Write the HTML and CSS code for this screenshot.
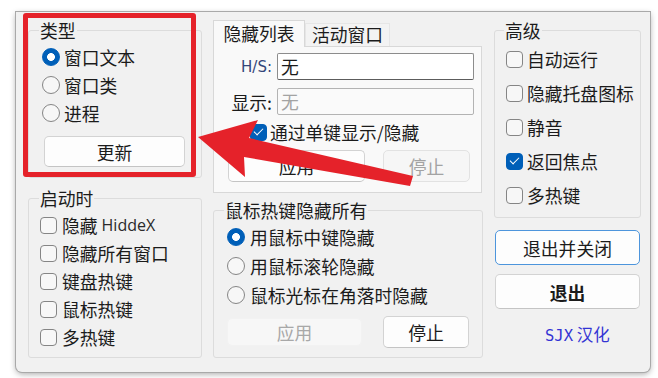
FILE: index.html
```html
<!DOCTYPE html>
<html lang="zh-CN">
<head>
    <meta charset="UTF-8">
    <title>HiddeX</title>
    <link rel="stylesheet" href="styles.css">
</head>
<body>
    <div class="window">
        <div class="col col-left">
            <fieldset class="group group-type">
                <legend>类型</legend>
                <div class="opt"><span class="radio on"></span>窗口文本</div>
                <div class="opt"><span class="radio"></span>窗口类</div>
                <div class="opt"><span class="radio"></span>进程</div>
                <button class="btn btn-update">更新</button>
            </fieldset>

            <fieldset class="group group-start">
                <legend>启动时</legend>
                <div class="opt"><span class="check"></span>隐藏&nbsp;<span class="latin">HiddeX</span></div>
                <div class="opt"><span class="check"></span>隐藏所有窗口</div>
                <div class="opt"><span class="check"></span>键盘热键</div>
                <div class="opt"><span class="check"></span>鼠标热键</div>
                <div class="opt"><span class="check"></span>多热键</div>
            </fieldset>
        </div>

        <div class="col col-mid">
            <div class="tabs">
                <div class="tab active">隐藏列表</div>
                <div class="tab">活动窗口</div>
            </div>
            <div class="tab-panel">
                <div class="field">
                    <span class="field-label hs">H/S:</span>
                    <div class="input">无</div>
                </div>
                <div class="field field-2">
                    <span class="field-label">显示:</span>
                    <div class="input disabled">无</div>
                </div>
                <div class="opt check-row"><span class="check on"></span>通过单键显示/隐藏</div>
                <div class="btn-row">
                    <button class="btn btn-apply">应用</button>
                    <button class="btn btn-stop disabled">停止</button>
                </div>
            </div>

            <fieldset class="group group-mouse">
                <legend>鼠标热键隐藏所有</legend>
                <div class="opt"><span class="radio on"></span>用鼠标中键隐藏</div>
                <div class="opt"><span class="radio"></span>用鼠标滚轮隐藏</div>
                <div class="opt"><span class="radio"></span>鼠标光标在角落时隐藏</div>
                <div class="btn-row">
                    <button class="btn btn-apply flat">应用</button>
                    <button class="btn btn-stop">停止</button>
                </div>
            </fieldset>
        </div>

        <div class="col col-right">
            <fieldset class="group group-adv">
                <legend>高级</legend>
                <div class="opt"><span class="check"></span>自动运行</div>
                <div class="opt"><span class="check"></span>隐藏托盘图标</div>
                <div class="opt"><span class="check"></span>静音</div>
                <div class="opt"><span class="check on"></span>返回焦点</div>
                <div class="opt"><span class="check"></span>多热键</div>
            </fieldset>
            <button class="btn btn-wide default">退出并关闭</button>
            <button class="btn btn-wide bold">退出</button>
            <div class="credit"><span class="mono">SJX</span> 汉化</div>
        </div>
    </div>

    <!-- annotation drawn over the screenshot -->
    <div class="mark-box"></div>
    <svg class="mark-arrow" width="658" height="378" viewBox="0 0 658 378">
        <polygon points="198,137 258,120 249,138 413,176 410,186 244,157 245,177" fill="#e5222a"/>
    </svg>
</body>
</html>
```

FILE: styles.css
```css
* {
    box-sizing: border-box;
}

body {
    margin: 0;
    padding: 12px 0 0 16px;
    height: 378px;
    overflow: hidden;
    position: relative;
    background: #fff;
    font-family: "Noto Sans CJK SC", "Noto Sans", sans-serif;
    font-size: 17.8px;
    color: #1b1b1b;
}

.window {
    width: 634px;
    height: 360px;
    display: flex;
    gap: 11px;
    padding: 8px 0 0 12px;
    background: #f1f1f1;
    border-radius: 0 0 6px 6px;
    box-shadow: 0 0 0 1px #a9a9a9, 0 2px 6px rgba(0, 0, 0, 0.35);
}

.col {
    flex: none;
    display: flex;
    flex-direction: column;
}

.col-left {
    width: 174px;
}

.col-mid {
    width: 270px;
}

.col-right {
    width: 147px;
}

/* group boxes */
.group {
    margin: 0;
    min-width: 0;
    padding: 0 8px 0 11px;
    border: 1px solid #dcdcdc;
    border-radius: 3px;
}

.group legend {
    height: 20px;
    line-height: 20px;
    padding: 0 1px;
    margin-left: -1px;
}

.group-type {
    padding-top: 3px;
    padding-bottom: 10px;
}

.group-start {
    margin-top: 10px;
    padding-top: 3px;
    padding-bottom: 6px;
}

.group-mouse {
    margin-top: 7px;
    padding-top: 2px;
    padding-bottom: 9px;
}

.group-mouse .opt {
    height: 29px;
}

.group-adv {
    padding: 2px 8px 5px 10px;
}

.group-adv .opt {
    height: 34px;
}

/* options */
.opt {
    display: flex;
    align-items: center;
    height: 28px;
    white-space: nowrap;
}

.radio {
    flex: none;
    width: 18px;
    height: 18px;
    margin: 0 4px 0 2px;
    border: 1.5px solid #858585;
    border-radius: 50%;
    background: #f7f7f7;
}

.radio.on {
    border-color: #005fb8;
    background: radial-gradient(circle, #fff 0 3.6px, #005fb8 4.2px);
}

.group-mouse .radio {
    margin-right: 5px;
}

.check {
    flex: none;
    position: relative;
    width: 17px;
    height: 17px;
    margin-right: 5px;
    border: 1.5px solid #858585;
    border-radius: 4px;
    background: #f7f7f7;
}

.group-adv .check {
    margin: 0 4px 0 1px;
}

.check.on {
    border-color: #005fb8;
    background: #005fb8;
}

.check.on::after {
    content: "";
    position: absolute;
    left: 4.5px;
    top: 1px;
    width: 4px;
    height: 8px;
    border: solid #fff;
    border-width: 0 1.6px 1.6px 0;
    transform: rotate(45deg);
}

.latin {
    font-family: "Open Sans", "Noto Sans", sans-serif;
    font-size: 16px;
    color: #2a2a2a;
}

/* buttons */
.btn {
    flex: none;
    padding: 0;
    font-family: inherit;
    font-size: 17.8px;
    color: #1b1b1b;
    background: #fdfdfd;
    border: 1px solid #d3d3d3;
    border-bottom-color: #c4c4c4;
    border-radius: 5px;
}

.btn.disabled {
    color: #a3a3a3;
    background: #f6f6f6;
    border-color: #e2e2e2;
}

.btn.flat {
    color: #a8a8a8;
    background: #f7f7f7;
    border-color: #f2f2f2;
}

.btn-update {
    width: 141px;
    height: 31px;
    margin: 9px 0 0 4px;
}

.btn-row {
    display: flex;
    align-items: center;
}

/* tabs */
.tabs {
    display: flex;
    align-items: flex-end;
    height: 26px;
}

.tab {
    width: 85px;
    height: 23px;
    line-height: 21px;
    text-align: center;
    background: #f3f3f3;
    border: 1px solid #e6e6e6;
    border-bottom: 0;
}

.tab.active {
    position: relative;
    z-index: 1;
    width: 92px;
    height: 27px;
    line-height: 24px;
    margin-bottom: -1px;
    background: #f9f9f9;
    border-color: #d8d8d8;
}

.tab-panel {
    padding: 6px 7px 10px 0;
    background: #f9f9f9;
    border: 1px solid #d8d8d8;
    margin-right: 1px;
}

.field {
    display: flex;
    align-items: center;
    height: 27px;
}

.field-2 {
    margin-top: 8px;
}

.field-label {
    width: 58px;
    margin-right: 5px;
    text-align: right;
}

.field-label.hs {
    color: #34467a;
    font-family: "DejaVu Sans", sans-serif;
    font-size: 15px;
}

.input {
    width: 197px;
    height: 27px;
    line-height: 25px;
    padding-left: 3px;
    background: #fff;
    border: 1px solid #8c8c8c;
    border-bottom-color: #5c5c5c;
    border-radius: 2px;
}

.input.disabled {
    color: #a3a3a3;
    background: #fafafa;
    border-color: #b3b3b3;
}

.check-row {
    margin-top: 4px;
    height: 26px;
    padding-left: 36px;
}

.check-row .check {
    margin-right: 3px;
}

.tab-panel .btn-row {
    margin-top: 5px;
    padding-left: 14px;
    gap: 18px;
}

.tab-panel .btn-apply {
    width: 137px;
    height: 32px;
}

.tab-panel .btn-stop {
    width: 87px;
    height: 32px;
}

.group-mouse .btn-row {
    margin-top: 7px;
    height: 32px;
}

.group-mouse .btn-apply {
    width: 135px;
    height: 28px;
    margin-left: 2px;
}

.group-mouse .btn-stop {
    width: 86px;
    height: 32px;
    margin-left: 21px;
}

/* right column */
.btn-wide {
    width: 145px;
    height: 35px;
    margin: 12px 1px 0;
}

.btn-wide + .btn-wide {
    margin-top: 9px;
}

.btn-wide.default {
    border: 1.5px solid #4d95dc;
}

.btn-wide.bold {
    font-weight: bold;
}

.credit {
    margin-top: 13px;
    padding-left: 51px;
    height: 24px;
    line-height: 24px;
    font-size: 16.5px;
    color: #3434d4;
    white-space: nowrap;
}

.mono {
    font-family: "DejaVu Sans Mono", monospace;
    font-size: 15.5px;
}

/* red annotation */
.mark-box {
    position: absolute;
    left: 23px;
    top: 13px;
    width: 173px;
    height: 164px;
    border: 5px solid #e5222a;
    border-radius: 3px;
}

.mark-arrow {
    position: absolute;
    left: 0;
    top: 0;
    pointer-events: none;
}
```
